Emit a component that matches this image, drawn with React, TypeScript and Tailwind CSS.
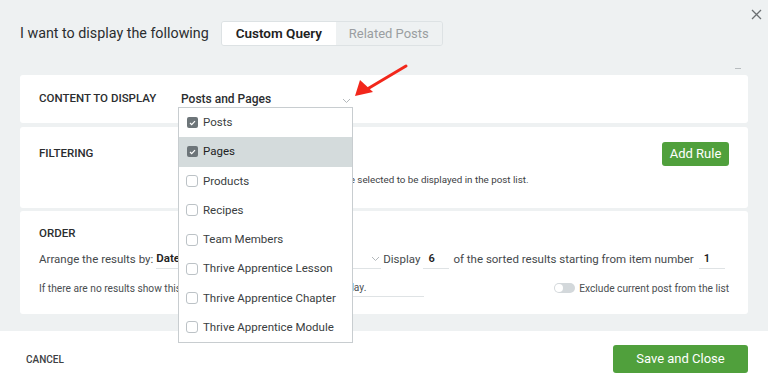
import React from 'react';

const items = [
  { label: 'Posts', checked: true },
  { label: 'Pages', checked: true, active: true },
  { label: 'Products' },
  { label: 'Recipes' },
  { label: 'Team Members' },
  { label: 'Thrive Apprentice Lesson' },
  { label: 'Thrive Apprentice Chapter' },
  { label: 'Thrive Apprentice Module' },
];

function Chevron({ className }: { className?: string }) {
  return (
    <svg className={className} width="9" height="6" viewBox="0 0 9 6" fill="none">
      <path d="M1 1l3.5 3.5L8 1" stroke="currentColor" strokeWidth="1" />
    </svg>
  );
}

function Checkbox({ checked }: { checked?: boolean }) {
  if (checked) {
    return (
      <span className="w-[11px] h-[11px] rounded-[2px] bg-[#6d7579] flex items-center justify-center">
        <svg width="7" height="6" viewBox="0 0 7 6" fill="none">
          <path d="M1 3l1.7 1.7L6 1.2" stroke="white" strokeWidth="1.2" />
        </svg>
      </span>
    );
  }
  return <span className="w-[12px] h-[12px] rounded-[3px] border border-[#bcc2c6] bg-white" />;
}

export default function App() {
  return (
    <div
      className="relative w-[768px] h-[387px] overflow-hidden bg-[#eef1f2] flex flex-col text-[#2b2d2f] whitespace-nowrap"
      style={{ fontFamily: 'Roboto, "Noto Sans", sans-serif' }}
    >
      {/* close */}
      <svg className="absolute left-[751px] top-[9px] text-[#6b6f72]" width="11" height="11" viewBox="0 0 11 11">
        <path d="M1 1l9 9M10 1l-9 9" stroke="currentColor" strokeWidth="1.3" />
      </svg>

      <div className="flex-1 px-[20px] pt-[21px]">
        {/* header */}
        <div className="flex items-center gap-[12px] h-[25px]">
          <span className="text-[14.3px]">I want to display the following</span>
          <div className="flex h-[25px] rounded-[3px] border border-[#dde2e4] overflow-hidden text-[13px]">
            <div className="bg-white w-[114px] flex items-center justify-center font-semibold text-[13.5px] text-[#222]">Custom Query</div>
            <div className="bg-[#eef1f2] w-[106px] flex items-center justify-center text-[#9a9ea1]">Related Posts</div>
          </div>
        </div>

        <div className="flex justify-end h-[29px] items-center pt-[16px] pr-[7px]">
          <span className="w-[6px] h-[1px] bg-[#b7bcbf]" />
        </div>

        {/* content to display */}
        <div className="bg-white rounded-[3px] h-[48px] flex items-center pl-[19px]">
          <span className="w-[142px] shrink-0 text-[11.5px] font-medium uppercase">Content to display</span>
          <span className="w-[170px] shrink-0 flex items-center justify-between">
            <span className="text-[12px] font-medium">Posts and Pages</span>
            <Chevron className="mt-[4px] text-[#b3b8bb]" />
          </span>
        </div>

        {/* filtering */}
        <div className="mt-[4px] bg-white rounded-[3px] h-[81px] pl-[19px] pr-[19px] pt-[15px]">
          <div className="flex items-center justify-between">
            <span className="text-[11.5px] font-medium uppercase">Filtering</span>
            <button className="h-[24px] w-[67px] rounded-[3px] bg-[#50a03c] text-white text-[13px]">Add Rule</button>
          </div>
          <div className="mt-[7px] pl-[142px] text-[9.8px] text-[#3d4144]">
            No rule is defined. All the content will be selected to be displayed in the post list.
          </div>
        </div>

        {/* order */}
        <div className="mt-[3px] bg-white rounded-[3px] h-[103px] pl-[19px] pr-[19px] pt-[14px]">
          <div className="text-[11.5px] font-medium uppercase">Order</div>
          <div className="mt-[8px] flex items-end text-[11.5px] text-[#45494c]">
            <span className="shrink-0">Arrange the results by:</span>
            <span className="ml-[3px] shrink-0 w-[104px] border-b border-[#dfe3e5] font-semibold text-[#222] flex justify-between items-center">
              Date <Chevron className="text-[#b3b8bb] mr-[2px]" />
            </span>
            <span className="ml-[6px] shrink-0 w-[115px] border-b border-[#dfe3e5] font-semibold text-[#222] flex justify-between items-center">
              <span className="pl-[4px]">Descending</span> <Chevron className="text-[#b3b8bb] mr-[1px]" />
            </span>
            <span className="ml-[2px] shrink-0">Display</span>
            <span className="ml-[3px] shrink-0 w-[26px] border-b border-[#dfe3e5] pl-[5px] font-semibold text-[#222] text-[11px]">6</span>
            <span className="ml-[4px] shrink-0">of the sorted results starting from item number</span>
            <span className="ml-[5px] shrink-0 w-[26px] border-b border-[#dfe3e5] pl-[5px] font-semibold text-[#222] text-[11px]">1</span>
          </div>
          <div className="mt-[11px] flex items-center text-[10.2px] text-[#4a4e51]">
            <span className="shrink-0">If there are no results show this message:</span>
            <span className="ml-[6px] shrink-0 w-[190px] border-b border-[#dfe3e5] pb-[1px]">There are no posts to display.</span>
            <span className="ml-auto shrink-0 w-[21px] h-[10px] rounded-full bg-[#d3d8db] flex items-center pl-[1px]">
              <span className="w-[8px] h-[8px] rounded-full bg-white" />
            </span>
            <span className="ml-[4px] shrink-0">Exclude current post from the list</span>
          </div>
        </div>
      </div>

      {/* footer */}
      <div className="h-[56px] bg-white flex items-center justify-between pl-[26px] pr-[20px]">
        <span className="text-[10px] font-medium text-[#3d4144] uppercase">Cancel</span>
        <button className="h-[28px] w-[135px] rounded-[3px] bg-[#50a03c] text-white text-[13px]">Save and Close</button>
      </div>

      {/* dropdown */}
      <div className="absolute left-[178px] top-[107px] w-[175px] bg-white border border-[#c8cdd0]">
        {items.map((it) => (
          <div
            key={it.label}
            className={`h-[29.25px] flex items-center gap-[5px] pl-[7px] text-[11.5px] ${
              it.active ? 'bg-[#d4dbdc] text-[#222]' : 'text-[#3a3e41]'
            }`}
          >
            <span className="w-[12px] flex justify-center">
              <Checkbox checked={it.checked} />
            </span>
            <span>{it.label}</span>
          </div>
        ))}
      </div>

      {/* arrow */}
      <svg className="absolute left-[350px] top-[60px]" width="62" height="42" viewBox="0 0 62 42">
        <path d="M56 6L14 31" stroke="#f2271b" strokeWidth="3" strokeLinecap="round" />
        <path d="M5 36L10 20L23 32Z" fill="#f2271b" />
      </svg>
    </div>
  );
}
